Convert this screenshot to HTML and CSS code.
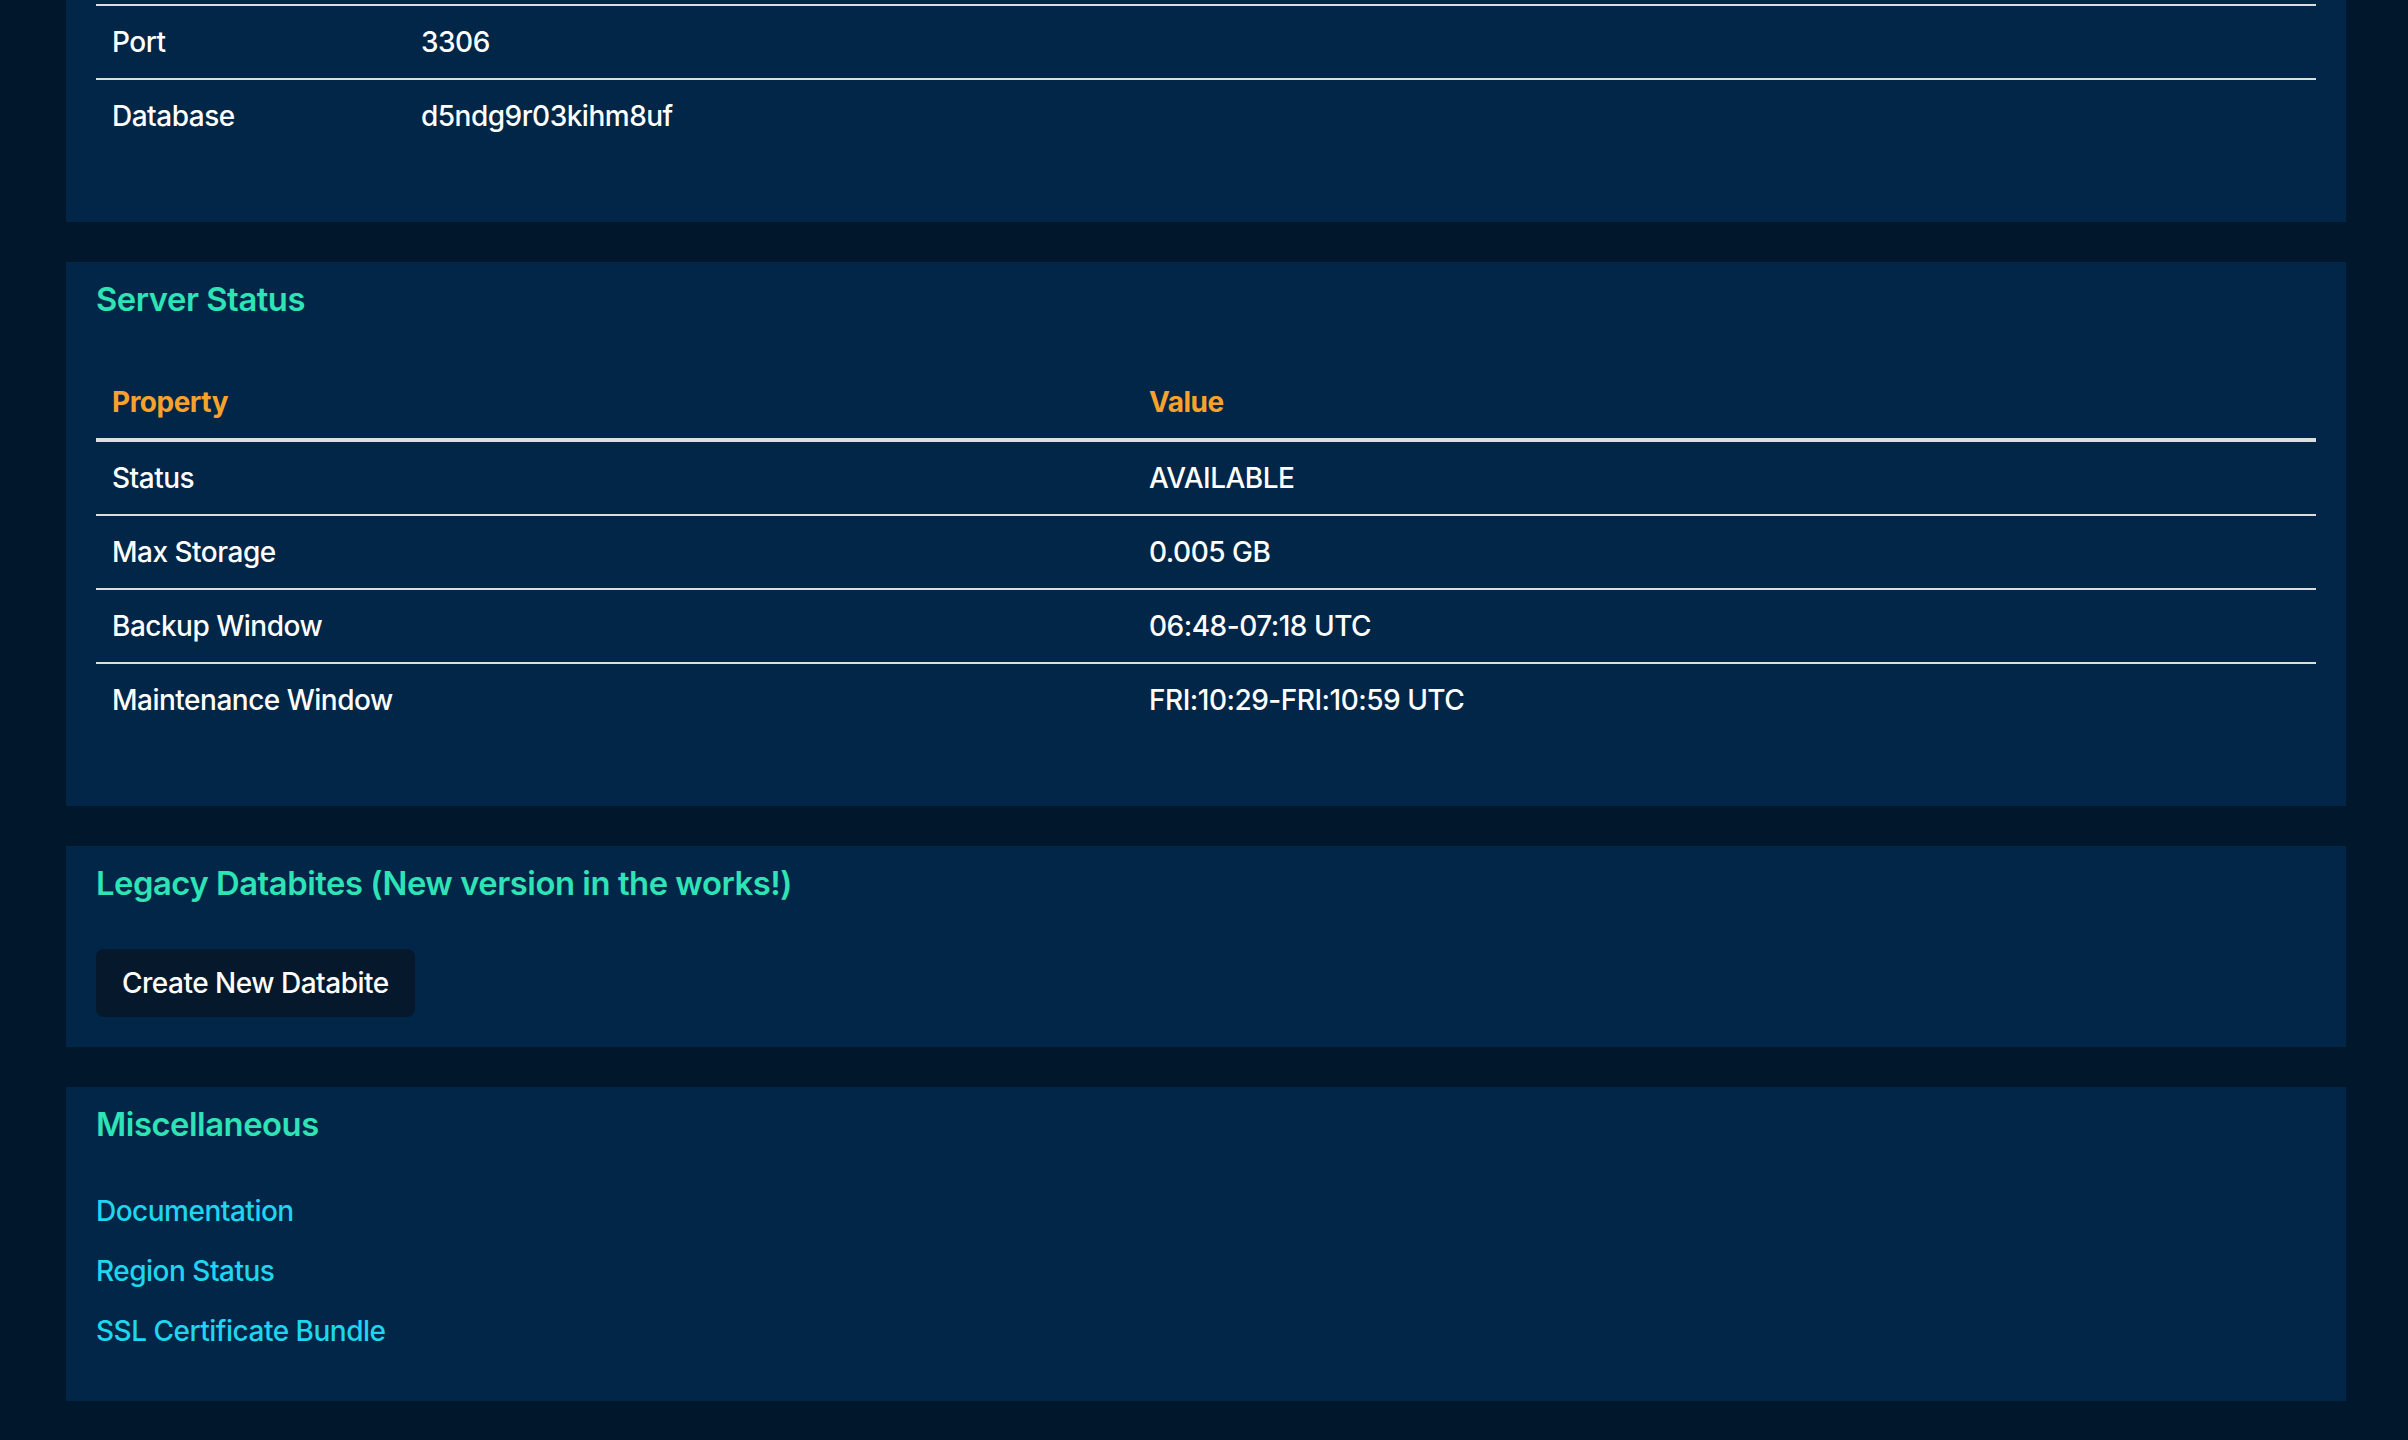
FILE: index.html
```html
<!DOCTYPE html>
<html lang="en">
<head>
<meta charset="utf-8">
<title>Database</title>
<link rel="stylesheet" href="styles.css">
</head>
<body>
<main class="page">
  <section class="card card-first">
    <table class="kv kv-conn">
      <tbody>
        <tr class="first"><td>Port</td><td>3306</td></tr>
        <tr><td>Database</td><td>d5ndg9r03kihm8uf</td></tr>
      </tbody>
    </table>
  </section>

  <section class="card">
    <h3 class="card-title">Server Status</h3>
    <table class="kv kv-status">
      <thead>
        <tr><th>Property</th><th>Value</th></tr>
      </thead>
      <tbody>
        <tr><td>Status</td><td>AVAILABLE</td></tr>
        <tr><td>Max Storage</td><td>0.005 GB</td></tr>
        <tr><td>Backup Window</td><td>06:48-07:18 UTC</td></tr>
        <tr><td>Maintenance Window</td><td>FRI:10:29-FRI:10:59 UTC</td></tr>
      </tbody>
    </table>
  </section>

  <section class="card">
    <h3 class="card-title">Legacy Databites (New version in the works!)</h3>
    <button class="btn" type="button">Create New Databite</button>
  </section>

  <section class="card card-links">
    <h3 class="card-title">Miscellaneous</h3>
    <ul class="links">
      <li><a href="#">Documentation</a></li>
      <li><a href="#">Region Status</a></li>
      <li><a href="#">SSL Certificate Bundle</a></li>
    </ul>
  </section>
</main>
</body>
</html>
```
FILE: styles.css
```css
html, body {
  margin: 0;
  padding: 0;
  background: #01172b;
}

body {
  font-family: Inter, "Noto Sans", "Liberation Sans", sans-serif;
  font-size: 28px;
  color: #ffffff;
  font-weight: 500;
  letter-spacing: -0.5px;
}

.page {
  display: flex;
  flex-direction: column;
  gap: 40px;
  padding: 0 62px 40px 66px;
}

.card {
  background: #012647;
  padding: 16px 30px 30px;
}

.card-first {
  padding-top: 4px;
}

.card-title {
  margin: 0 0 45px;
  font-size: 32.76px;
  line-height: 42.6px;
  font-weight: 600;
  color: #2ee3b6;
  letter-spacing: -0.45px;
}

.kv {
  width: 100%;
  border-collapse: collapse;
  margin-bottom: 40px;
}

.kv th,
.kv td {
  text-align: left;
  padding: 16px 16px;
  line-height: 40px;
  vertical-align: top;
}

.kv th {
  color: #f6a22c;
  font-weight: 700;
  border-bottom: 4px solid #dddddd;
}

.kv tbody tr {
  border-bottom: 2px solid #dddddd;
}

.kv tbody tr:last-child {
  border-bottom: none;
}

.kv-conn tr.first {
  border-top: 2px solid #dddddd;
}

.kv-conn td:first-child {
  width: 277px;
}

.kv-status th:first-child,
.kv-status td:first-child {
  width: 1005px;
}

.btn {
  font: inherit;
  letter-spacing: inherit;
  color: #ffffff;
  background: #06192c;
  border: none;
  border-radius: 8px;
  padding: 14px 26px 14px;
  line-height: 40px;
  cursor: pointer;
}

.links {
  list-style: none;
  margin: 0;
  padding: 0;
}

.links li {
  line-height: 40px;
  margin-bottom: 20px;
}

.links a {
  color: #1fd5ef;
  text-decoration: none;
}
```
